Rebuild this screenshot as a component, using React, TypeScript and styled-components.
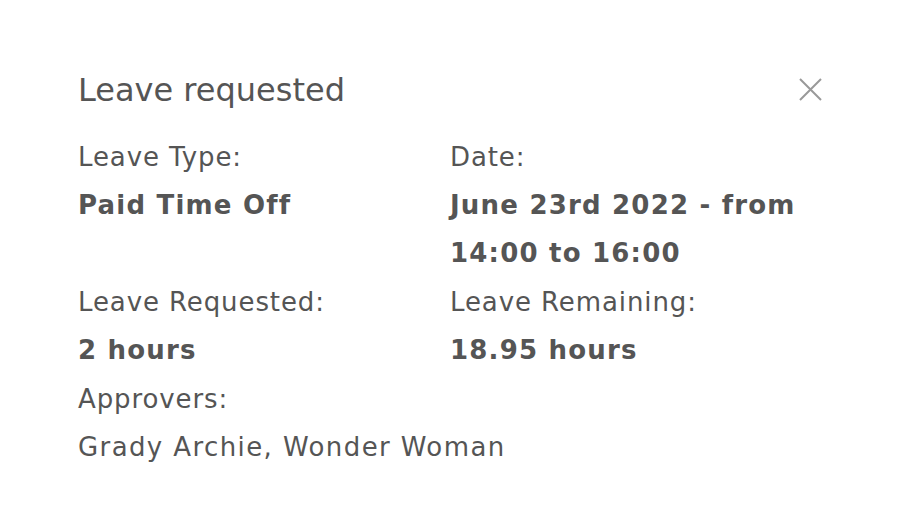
import styled, { createGlobalStyle } from 'styled-components'

const GlobalStyle = createGlobalStyle`
  html, body {
    margin: 0;
    background: #ffffff;
  }
  body {
    font-family: "DejaVu Sans", "Noto Sans", sans-serif;
    color: #555555;
  }
`

const Panel = styled.div`
  width: 906px;
  height: 512px;
  box-sizing: border-box;
  padding: 66px 84px 0 78px;
`

const Header = styled.div`
  display: flex;
  justify-content: space-between;
  align-items: center;
  height: 48px;
  margin-bottom: 19px;
`

const Title = styled.h2`
  margin: 0;
  font-size: 32px;
  font-weight: 500;
  color: #555555;
`

const CloseButton = styled.button`
  border: none;
  background: none;
  padding: 0;
  width: 24px;
  height: 24px;
  cursor: pointer;
  display: flex;
`

const Grid = styled.div`
  display: grid;
  grid-template-columns: 372px 1fr;
  row-gap: 1px;
`

const Field = styled.div<{ $span?: boolean }>`
  display: flex;
  flex-direction: column;
  grid-column: ${(p) => (p.$span ? '1 / span 2' : 'auto')};
`

const Label = styled.span`
  font-size: 26px;
  line-height: 48px;
  font-weight: 400;
  letter-spacing: 0.9px;
`

const Value = styled.span<{ $bold?: boolean }>`
  font-size: 26px;
  line-height: 48px;
  font-weight: ${(p) => (p.$bold ? 700 : 400)};
  letter-spacing: ${(p) => (p.$bold ? '1.2px' : '1.4px')};
`

export default function App() {
  return (
    <>
      <GlobalStyle />
      <Panel>
        <Header>
          <Title>Leave requested</Title>
          <CloseButton aria-label="Close">
            <svg width="24" height="24" viewBox="0 0 24 24">
              <path d="M2 1L23 22M23 1L2 22" stroke="#999" strokeWidth="2" fill="none" />
            </svg>
          </CloseButton>
        </Header>
        <Grid>
          <Field>
            <Label>Leave Type:</Label>
            <Value $bold>Paid Time Off</Value>
          </Field>
          <Field>
            <Label>Date:</Label>
            <Value $bold>June 23rd 2022 - from 14:00 to 16:00</Value>
          </Field>
          <Field>
            <Label>Leave Requested:</Label>
            <Value $bold>2 hours</Value>
          </Field>
          <Field>
            <Label>Leave Remaining:</Label>
            <Value $bold>18.95 hours</Value>
          </Field>
          <Field $span>
            <Label>Approvers:</Label>
            <Value>Grady Archie, Wonder Woman</Value>
          </Field>
        </Grid>
      </Panel>
    </>
  )
}
